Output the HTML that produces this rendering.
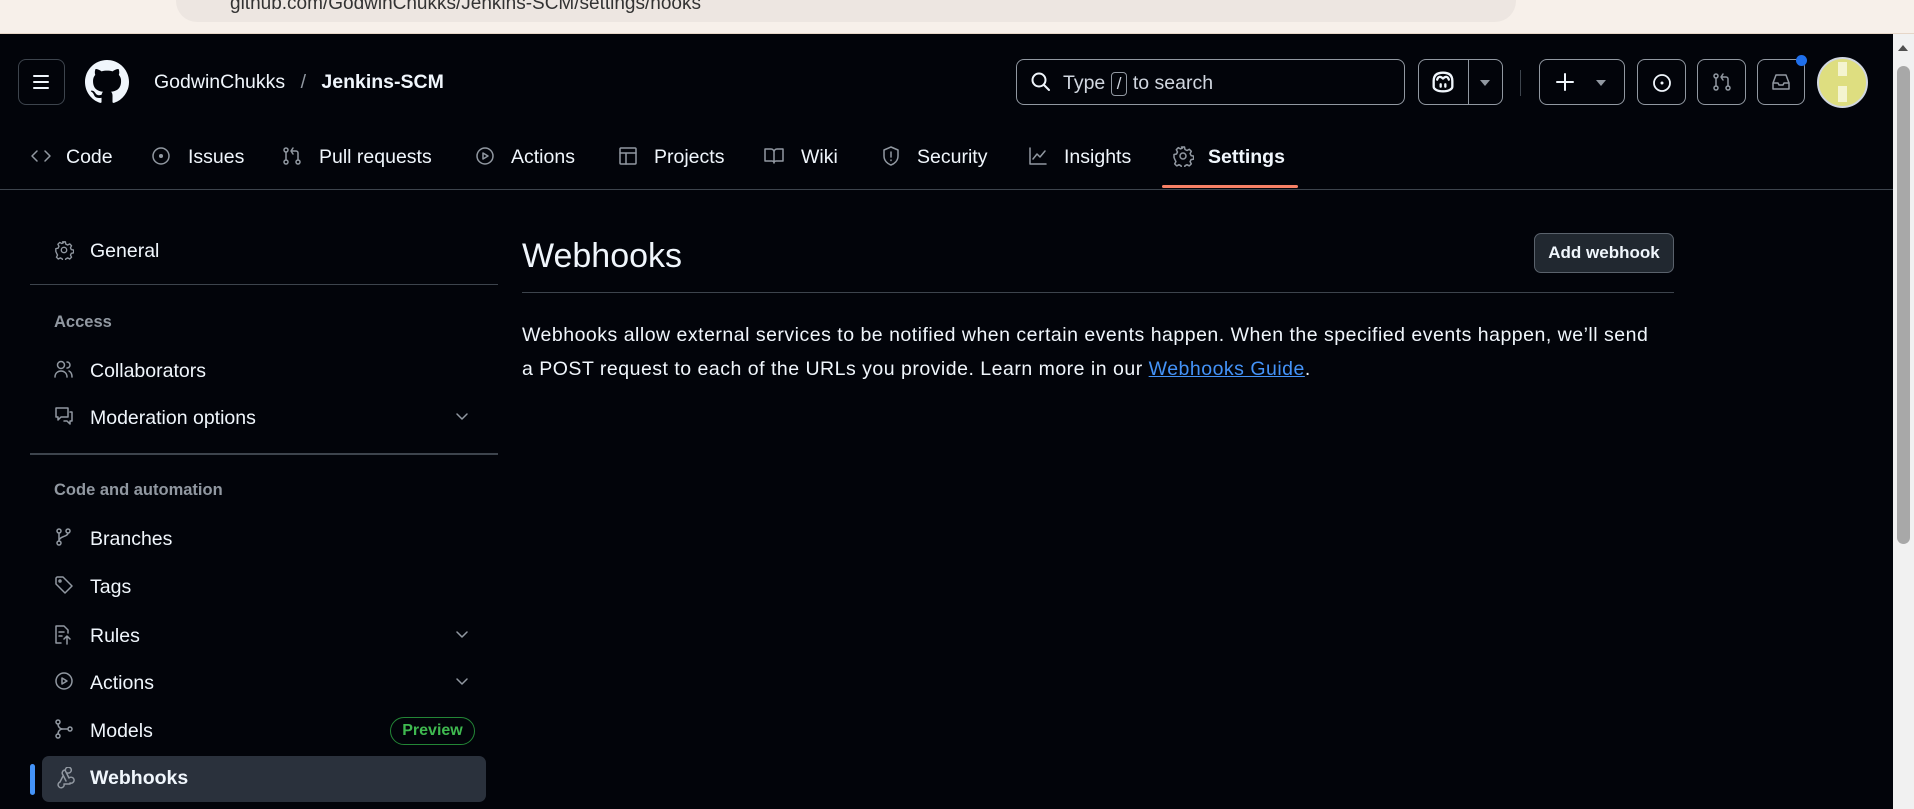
<!DOCTYPE html>
<html><head><meta charset="utf-8"><style>
*{margin:0;padding:0;box-sizing:border-box}
body{width:1914px;height:809px;overflow:hidden;background:#02040a;font-family:"Liberation Sans",sans-serif;color:#f0f6fc;position:relative}
.a{position:absolute}
.chrome{left:0;top:0;width:1914px;height:34px;background:#f7f0ea;border-bottom:1px solid #e6d6c8}
.url{left:176px;top:-20px;width:1340px;height:42px;background:#ede6e1;border-radius:21px;color:#333;font-size:19px;padding:14px 0 0 54px;line-height:20px;overflow:hidden}
.btn{border:1px solid #3d444d;border-radius:8px}
.nav{font-size:19.5px;top:146px;color:#f0f6fc}
svg{position:absolute;fill:none;stroke:#9198a1;stroke-width:1.5;stroke-linecap:round;stroke-linejoin:round}
.side{font-size:19.5px;left:90px}
.lbl{font-size:16.5px;font-weight:bold;color:#9198a1;left:54px}
.chev{left:452px;width:20px;height:20px}
</style></head><body>
<div class="a chrome"><div class="a url">github.com/GodwinChukks/Jenkins-SCM/settings/hooks</div></div>

<!-- header -->
<div class="a btn" style="left:18px;top:59px;width:47px;height:46px"></div>
<svg style="left:30px;top:71px" width="22" height="22" viewBox="0 0 22 22"><path d="M4 5h14M4 11h14M4 17h14" stroke="#f0f6fc" stroke-width="2"/></svg>
<svg style="left:85px;top:60px;stroke:none;fill:#f0f6fc" width="44" height="44" viewBox="0 0 16 16"><path d="M8 0C3.580 0 0 3.58 0 8c0 3.54 2.29 6.53 5.47 7.59.4.07.55-.17.55-.38 0-.19-.01-.82-.01-1.49-2.01.37-2.530-.49-2.690-.94-.09-.23-.48-.94-.82-1.13-.28-.15-.68-.52-.01-.53.63-.01 1.08.58 1.23.82.72 1.21 1.87.87 2.33.66.07-.52.28-.87.51-1.07-1.78-.2-3.64-.89-3.64-3.95 0-.87.31-1.59.82-2.15-.08-.2-.36-1.02.08-2.12 0 0 .67-.21 2.2.82.64-.18 1.32-.27 2-.27.68 0 1.36.09 2 .27 1.53-1.04 2.2-.82 2.2-.82.44 1.1.16 1.92.08 2.12.51.56.82 1.27.82 2.15 0 3.07-1.87 3.75-3.65 3.95.29.25.54.73.54 1.48 0 1.07-.01 1.93-.01 2.2 0 .21.15.46.55.38A8.013 8.013 0 0016 8c0-4.42-3.58-8-8-8z"/></svg>
<div class="a" style="left:154px;top:71px;font-size:19.5px">GodwinChukks <span style="color:#9198a1;margin:0 10px">/</span> <b>Jenkins-SCM</b></div>

<div class="a btn" style="left:1016px;top:59px;width:389px;height:46px;border-color:#9198a1"></div>
<svg style="left:1030px;top:71px" width="22" height="22" viewBox="0 0 22 22"><circle cx="9" cy="9" r="6.5" stroke="#f0f6fc" stroke-width="2"/><path d="M14 14l5 5" stroke="#f0f6fc" stroke-width="2"/></svg>
<div class="a" style="left:1063px;top:72px;font-size:19.5px;color:#d1d7e0">Type <span style="display:inline-block;border:1px solid #9198a1;border-radius:4px;padding:0 5px;font-size:17px;line-height:22px">/</span> to search</div>

<div class="a btn" style="left:1418px;top:59px;width:85px;height:46px;border-color:#9198a1"></div>
<div class="a" style="left:1468px;top:59px;width:1px;height:46px;background:#9198a1"></div>
<svg style="left:1429px;top:68px" width="28" height="28" viewBox="0 0 24 24"><path d="M4 11c0-5 3-7 8-7s8 2 8 7v5c0 2-3 4-8 4s-8-2-8-4z" stroke="#f0f6fc" stroke-width="2"/><path d="M7 10c1-3 3-3 5-1 2-2 4-2 5 1M10 14v2M14 14v2" stroke="#f0f6fc" stroke-width="2"/></svg>
<div class="a" style="left:1480px;top:80px;border:5px solid transparent;border-top:6px solid #9198a1"></div>
<div class="a" style="left:1520px;top:70px;width:1px;height:26px;background:#3d444d"></div>
<div class="a btn" style="left:1539px;top:59px;width:86px;height:46px;border-color:#9198a1"></div>
<svg style="left:1553px;top:70px" width="24" height="24" viewBox="0 0 24 24"><path d="M12 4v16M4 12h16" stroke="#f0f6fc" stroke-width="2"/></svg>
<div class="a" style="left:1596px;top:80px;border:5px solid transparent;border-top:6px solid #9198a1"></div>
<div class="a btn" style="left:1637px;top:59px;width:49px;height:46px;border-color:#9198a1"></div>
<svg style="left:1651px;top:72px" width="22" height="22" viewBox="0 0 22 22"><circle cx="11" cy="11" r="8" stroke="#f0f6fc" stroke-width="1.8"/><circle cx="11" cy="11" r="1.5" fill="#f0f6fc" stroke="none"/></svg>
<div class="a btn" style="left:1697px;top:59px;width:49px;height:46px;border-color:#9198a1"></div>
<svg style="left:1711px;top:71px" width="22" height="22" viewBox="0 0 22 22" stroke="#f0f6fc"><circle cx="5" cy="5" r="2"/><circle cx="5" cy="17" r="2"/><circle cx="17" cy="17" r="2"/><path d="M5 7v8M17 15V8a2 2 0 0 0-2-2h-4M12 3l-2 3 2 3"/></svg>
<div class="a btn" style="left:1757px;top:59px;width:48px;height:46px;border-color:#9198a1"></div>
<svg style="left:1770px;top:71px" width="22" height="22" viewBox="0 0 22 22" stroke="#f0f6fc"><path d="M3 12l3-8h10l3 8v6H3zM3 12h5l1 2h4l1-2h5"/></svg>
<div class="a" style="left:1796px;top:55px;width:11px;height:11px;border-radius:50%;background:#1f6feb"></div>
<div class="a" style="left:1817px;top:57px;width:51px;height:51px;border-radius:50%;background:#dede80;border:2px solid #d1d7e0"></div>
<div class="a" style="left:1838px;top:62px;width:9px;height:40px;background:#f4f4d0"></div>
<div class="a" style="left:1838px;top:76px;width:9px;height:10px;background:#dede80"></div>

<!-- tabs -->
<svg style="left:30px;top:145px" width="22" height="22" viewBox="0 0 22 22"><path d="M7 6l-5 5 5 5M15 6l5 5-5 5"/></svg><div class="a nav" style="left:66px">Code</div>
<svg style="left:150px;top:145px" width="22" height="22" viewBox="0 0 22 22"><circle cx="11" cy="11" r="8"/><circle cx="11" cy="11" r="1.3" fill="#9198a1"/></svg><div class="a nav" style="left:188px">Issues</div>
<svg style="left:281px;top:145px" width="22" height="22" viewBox="0 0 22 22"><circle cx="5" cy="5" r="2"/><circle cx="5" cy="17" r="2"/><circle cx="17" cy="17" r="2"/><path d="M5 7v8M17 15V8a2 2 0 0 0-2-2h-4M12 3l-2 3 2 3"/></svg><div class="a nav" style="left:319px">Pull requests</div>
<svg style="left:474px;top:145px" width="22" height="22" viewBox="0 0 22 22"><circle cx="11" cy="11" r="8"/><path d="M9 8v6l5-3z"/></svg><div class="a nav" style="left:511px">Actions</div>
<svg style="left:617px;top:145px" width="22" height="22" viewBox="0 0 22 22"><rect x="3" y="3" width="16" height="16" rx="1"/><path d="M3 8h16M9 8v11"/></svg><div class="a nav" style="left:654px">Projects</div>
<svg style="left:763px;top:145px" width="22" height="22" viewBox="0 0 22 22"><path d="M2 4h6a3 3 0 0 1 3 3v11a2 2 0 0 0-2-2H2zM20 4h-6a3 3 0 0 0-3 3v11a2 2 0 0 1 2-2h7z"/></svg><div class="a nav" style="left:801px">Wiki</div>
<svg style="left:880px;top:145px" width="22" height="22" viewBox="0 0 22 22"><path d="M11 2l7 3v6c0 5-4 8-7 9-3-1-7-4-7-9V5z"/><path d="M11 7v5M11 15v.5"/></svg><div class="a nav" style="left:917px">Security</div>
<svg style="left:1027px;top:145px" width="22" height="22" viewBox="0 0 22 22"><path d="M3 3v16h16M6 14l4-5 3 3 5-6"/></svg><div class="a nav" style="left:1064px">Insights</div>
<svg style="left:1172px;top:145px" width="22" height="22" viewBox="0 0 22 22"><circle cx="11" cy="11" r="3"/><path d="M9.5 2h3l.5 2.5 2 1 2.3-1.2 2 2-1.2 2.3 1 2 2.5.5v3l-2.5.5-1 2 1.2 2.3-2 2-2.3-1.2-2 1-.5 2.5h-3l-.5-2.5-2-1-2.3 1.2-2-2 1.2-2.3-1-2L2 12.5v-3l2.5-.5 1-2-1.2-2.3 2-2 2.3 1.2 2-1z"/></svg><div class="a nav" style="left:1208px;font-weight:bold">Settings</div>
<div class="a" style="left:1162px;top:185px;width:136px;height:3px;background:#f78166;border-radius:2px"></div>
<div class="a" style="left:0;top:189px;width:1893px;height:1px;background:#3d444d"></div>

<!-- scrollbar -->
<div class="a" style="left:1893px;top:34px;width:21px;height:775px;background:#f1f1f1"></div>
<div class="a" style="left:1897px;top:66px;width:13px;height:478px;background:#a8a8a8;border-radius:7px"></div>
<div class="a" style="left:1898px;top:45px;border:5px solid transparent;border-bottom:6px solid #505050;border-top:0"></div>

<!-- sidebar -->
<svg style="left:54px;top:240px" width="20" height="20" viewBox="0 0 22 22"><circle cx="11" cy="11" r="3"/><path d="M9.5 2h3l.5 2.5 2 1 2.3-1.2 2 2-1.2 2.3 1 2 2.5.5v3l-2.5.5-1 2 1.2 2.3-2 2-2.3-1.2-2 1-.5 2.5h-3l-.5-2.5-2-1-2.3 1.2-2-2 1.2-2.3-1-2L2 12.5v-3l2.5-.5 1-2-1.2-2.3 2-2 2.3 1.2 2-1z"/></svg>
<div class="a side" style="top:240px">General</div>
<div class="a" style="left:30px;top:284px;width:468px;height:1px;background:#3d444d"></div>
<div class="a lbl" style="top:313px">Access</div>
<svg style="left:54px;top:359px" width="20" height="20" viewBox="0 0 20 20"><circle cx="7" cy="6" r="3.5"/><path d="M1 18c0-4 3-6 6-6s6 2 6 6M13 3a3 3 0 0 1 0 6M15 12c2 1 3 3 3 6"/></svg>
<div class="a side" style="top:360px">Collaborators</div>
<svg style="left:54px;top:406px" width="20" height="20" viewBox="0 0 20 20"><path d="M2 2h12v9H7l-3 3v-3H2zM16 6h2v9h-2v3l-3-3h-3"/></svg>
<div class="a side" style="top:407px">Moderation options</div>
<svg class="chev" style="top:406px" viewBox="0 0 20 20"><path d="M5 8l5 5 5-5"/></svg>
<div class="a" style="left:30px;top:453px;width:468px;height:2px;background:#3d444d"></div>
<div class="a lbl" style="top:481px">Code and automation</div>
<svg style="left:54px;top:527px" width="20" height="20" viewBox="0 0 20 20"><circle cx="5" cy="4" r="2"/><circle cx="5" cy="16" r="2"/><circle cx="14" cy="4" r="2"/><path d="M5 6v8M14 6c0 4-9 3-9 8"/></svg>
<div class="a side" style="top:528px">Branches</div>
<svg style="left:54px;top:575px" width="20" height="20" viewBox="0 0 20 20"><path d="M2 3v6l9 9 7-7-9-9H3z"/><circle cx="6" cy="6" r="1"/></svg>
<div class="a side" style="top:576px">Tags</div>
<svg style="left:54px;top:624px" width="20" height="22" viewBox="0 0 20 22"><path d="M10 2H2v17h5M10 2l4 4v3M13 20v-8M10 15l3-3 3 3M5 8h5M5 12h3"/></svg>
<div class="a side" style="top:625px">Rules</div>
<svg class="chev" style="top:624px" viewBox="0 0 20 20"><path d="M5 8l5 5 5-5"/></svg>
<svg style="left:54px;top:671px" width="20" height="20" viewBox="0 0 20 20"><circle cx="10" cy="10" r="8"/><path d="M8 7v6l5-3z"/></svg>
<div class="a side" style="top:672px">Actions</div>
<svg class="chev" style="top:671px" viewBox="0 0 20 20"><path d="M5 8l5 5 5-5"/></svg>
<svg style="left:54px;top:719px" width="20" height="20" viewBox="0 0 20 20"><circle cx="4" cy="3" r="2"/><circle cx="4" cy="17" r="2"/><circle cx="16" cy="10" r="2"/><path d="M4 5c0 3 2 5 5 5h5M4 15c0-3 2-5 5-5"/></svg>
<div class="a side" style="top:720px">Models</div>
<div class="a" style="left:390px;top:717px;width:85px;height:28px;border:1.5px solid #238636;border-radius:14px;color:#3fb950;font-size:16px;font-weight:bold;text-align:center;line-height:25px">Preview</div>
<div class="a" style="left:42px;top:756px;width:444px;height:46px;background:#2a313c;border-radius:7px"></div>
<div class="a" style="left:30px;top:764px;width:5px;height:31px;background:#4493f8;border-radius:3px"></div>
<svg style="left:54px;top:767px" width="22" height="22" viewBox="0 0 22 22"><path d="M9 9L6 15a3 3 0 1 0 4 2h6M11 3a3 3 0 0 0-2 5l3 6M13 6a3 3 0 0 1 1 0M16 16a3 3 0 1 0-1-5l-3-6a3 3 0 1 1 3 1"/></svg>
<div class="a side" style="top:767px;font-weight:bold">Webhooks</div>

<!-- main -->
<div class="a" style="left:522px;top:237px;font-size:34px">Webhooks</div>
<div class="a" style="left:1534px;top:233px;width:140px;height:40px;background:#212830;border:1px solid #5a626c;border-radius:7px;font-size:17px;font-weight:bold;text-align:center;line-height:38px">Add webhook</div>
<div class="a" style="left:522px;top:292px;width:1152px;height:1px;background:#3d444d"></div>
<div class="a" style="left:522px;top:318px;width:1148px;font-size:19.5px;line-height:34px;letter-spacing:0.5px;color:#f0f6fc">Webhooks allow external services to be notified when certain events happen. When the specified events happen, we’ll send<br>a POST request to each of the URLs you provide. Learn more in our <span style="color:#4493f8;text-decoration:underline">Webhooks Guide</span>.</div>
</body></html>
